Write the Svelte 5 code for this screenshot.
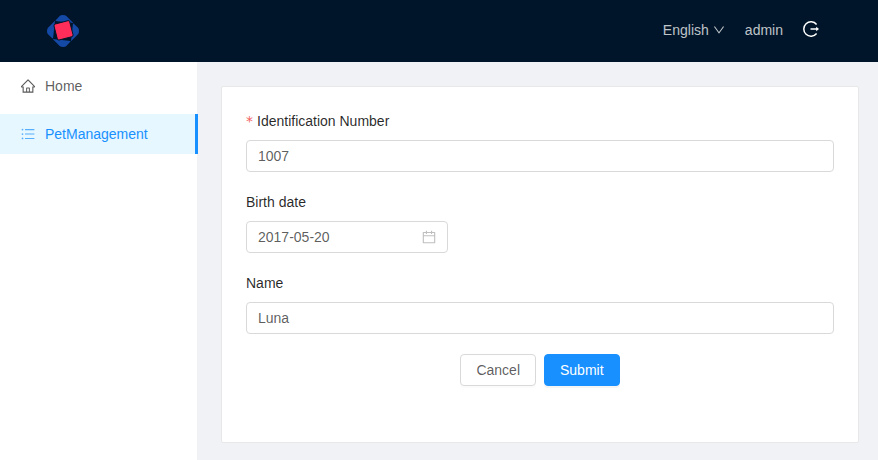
<script>
  let language = $state('en');
  let pet = $state({ identificationNumber: '1007', birthDate: '2017-05-20', name: 'Luna' });
</script>

<div class="layout">
  <header>
    <a class="logo" href="#home" aria-label="Home page">
      <svg viewBox="0 0 102 102" width="34" height="34" aria-hidden="true">
        <path fill="#1449a6" d="M27 21 L41 6 Q44 3 50 3 Q58 3 61 6 L82 27ZM81 27 L96 41 Q99 44 99 50 Q99 58 96 61 L75 82ZM75 81 L61 96 Q58 99 52 99 Q44 99 41 96 L20 75ZM21 75 L6 61 Q3 58 3 52 Q3 44 6 41 L27 20Z" />
        <path fill="#ff2d5a" stroke="#001529" stroke-width="3" d="M28 30 L66 20 Q70 19 71 23 L81 62 Q82 67 78 68 L39 78 Q35 79 34 75 L24 36 Q23 31 28 30Z" />
        <path fill="none" stroke="#001529" stroke-width="3" d="M22 15 L34 27M87 22 L75 34M80 87 L68 75M15 80 L27 68" />
      </svg>
    </a>
    <div class="tools">
      <label class="language">
        <select bind:value={language} aria-label="Language">
          <option value="en">English</option>
        </select>
        <svg viewBox="64 64 896 896" width="12" height="12" fill="currentColor" aria-hidden="true">
          <path d="M884 256h-75c-5.100 0-9.900 2.500-12.900 6.600L512 654.200 227.900 262.600c-3-4.100-7.800-6.600-12.900-6.600h-75c-6.500 0-10.300 7.400-6.500 12.700l352.600 486.100c12.800 17.600 39 17.600 51.700 0l352.600-486.100c3.900-5.300.1-12.700-6.400-12.700z" />
        </svg>
      </label>
      <span>admin</span>
      <button class="logout" type="button" aria-label="Log out">
        <svg viewBox="0 0 16 16" width="16" height="16" aria-hidden="true">
          <path fill="none" stroke="currentColor" stroke-width="1.500" d="M13.600 3.500 A7.200 7.200 0 1 0 13.600 12.500 M7.500 8 H14" />
          <path fill="currentColor" d="M13.200 5.700 L16 8 L13.200 10.300Z" />
        </svg>
      </button>
    </div>
  </header>

  <div class="body">
    <nav>
      <a href="#home">
        <svg viewBox="64 64 896 896" width="14" height="14" fill="currentColor" aria-hidden="true">
          <path d="M946.500 505L560.100 118.800l-25.900-25.900a31.500 31.500 0 0 0-44.400 0L77.500 505a63.900 63.900 0 0 0-18.800 46c.4 35.200 29.700 63.300 64.900 63.300h42.500V940h691.800V614.300h43.400c17.100 0 33.200-6.700 45.300-18.800a63.600 63.600 0 0 0 18.700-45.300c0-17-6.700-33.100-18.800-45.200zM568 868H456V664h112v204zm217.900-325.700V868H632V640c0-22.100-17.900-40-40-40H432c-22.100 0-40 17.900-40 40v228H238.100V542.300h-96l370-369.700 23.100 23.100L882 542.300h-96.100z" />
        </svg>
        <span>Home</span>
      </a>
      <a class="active" href="#pets" aria-current="page">
        <svg viewBox="64 64 896 896" width="14" height="14" fill="currentColor" aria-hidden="true">
          <path d="M912 192H328c-4.400 0-8 3.600-8 8v56c0 4.400 3.600 8 8 8h584c4.400 0 8-3.600 8-8v-56c0-4.400-3.600-8-8-8zm0 284H328c-4.400 0-8 3.600-8 8v56c0 4.400 3.600 8 8 8h584c4.400 0 8-3.600 8-8v-56c0-4.400-3.600-8-8-8zm0 284H328c-4.400 0-8 3.600-8 8v56c0 4.400 3.600 8 8 8h584c4.400 0 8-3.600 8-8v-56c0-4.400-3.600-8-8-8zM104 228a56 56 0 1 0 112 0 56 56 0 1 0-112 0zm0 284a56 56 0 1 0 112 0 56 56 0 1 0-112 0zm0 284a56 56 0 1 0 112 0 56 56 0 1 0-112 0z" />
        </svg>
        <span>PetManagement</span>
      </a>
    </nav>

    <main>
      <form class="card" onsubmit={(event) => event.preventDefault()}>
        <div class="field">
          <label class="required" for="identification-number">Identification Number</label>
          <input id="identification-number" type="text" required bind:value={pet.identificationNumber} />
        </div>
        <div class="field">
          <label for="birth-date">Birth date</label>
          <div class="date">
            <input id="birth-date" type="text" bind:value={pet.birthDate} />
            <svg viewBox="64 64 896 896" width="14" height="14" fill="currentColor" aria-hidden="true">
              <path d="M880 184H712v-64c0-4.400-3.600-8-8-8h-56c-4.400 0-8 3.600-8 8v64H384v-64c0-4.400-3.600-8-8-8h-56c-4.400 0-8 3.600-8 8v64H144c-17.700 0-32 14.300-32 32v664c0 17.700 14.300 32 32 32h736c17.700 0 32-14.300 32-32V216c0-17.700-14.300-32-32-32zm-40 656H184V460h656v380zM184 392V256h128v48c0 4.400 3.600 8 8 8h56c4.400 0 8-3.600 8-8v-48h256v48c0 4.400 3.600 8 8 8h56c4.400 0 8-3.600 8-8v-48h128v136H184z" />
            </svg>
          </div>
        </div>
        <div class="field">
          <label for="pet-name">Name</label>
          <input id="pet-name" type="text" bind:value={pet.name} />
        </div>
        <div class="actions">
          <button type="button">Cancel</button>
          <button class="primary" type="submit">Submit</button>
        </div>
      </form>
    </main>
  </div>
</div>

<style>
  .layout {
    display: flex;
    flex-direction: column;
    min-height: 100vh;
    background: #f0f2f5;
    color: rgba(0, 0, 0, 0.65);
    font: 14px/21px "Liberation Sans", Arial, sans-serif;
  }

  .layout * {
    box-sizing: border-box;
  }

  svg {
    display: block;
    flex: none;
  }

  header {
    display: flex;
    align-items: center;
    justify-content: space-between;
    height: 62px;
    padding: 0 59px 0 46px;
    background: #001529;
    color: rgba(255, 255, 255, 0.75);
  }

  .tools {
    display: flex;
    align-items: center;
    gap: 20px;
    padding-bottom: 2px;
  }

  .language {
    display: flex;
    align-items: center;
    gap: 4px;
  }

  select {
    appearance: none;
    padding: 0;
    border: 0;
    background: transparent;
    color: inherit;
    font: inherit;
  }

  .logout {
    padding: 0 0 2px;
    border: 0;
    background: transparent;
    color: #fff;
  }

  .body {
    display: flex;
    flex: 1;
  }

  nav {
    flex: none;
    width: 197px;
    padding-top: 4px;
    background: #fff;
  }

  nav a {
    display: flex;
    align-items: center;
    gap: 10px;
    height: 40px;
    margin: 0 -1px 8px 0;
    padding-left: 21px;
    border-right: 3px solid transparent;
    color: inherit;
    text-decoration: none;
  }

  nav a.active {
    border-right-color: #1890ff;
    background: #e6f7ff;
    color: #1890ff;
  }

  nav a.active svg {
    opacity: 0.7;
  }

  main {
    flex: 1;
    min-width: 0;
    padding: 24px 19px 17px 24px;
  }

  .card {
    padding: 24px 24px 56px;
    border: 1px solid #e8e8e8;
    border-radius: 2px;
    background: #fff;
  }

  .field {
    margin-bottom: 20px;
  }

  .field label {
    display: block;
    margin-bottom: 8px;
    color: rgba(0, 0, 0, 0.85);
  }

  .required::before {
    content: "*";
    margin-right: 4px;
    color: #f2605f;
    font-family: "DejaVu Sans", sans-serif;
    line-height: 1;
  }

  input {
    display: block;
    width: 100%;
    height: 32px;
    padding: 4px 11px;
    border: 1px solid #d9d9d9;
    border-radius: 4px;
    background: #fff;
    color: inherit;
    font: inherit;
  }

  .date {
    position: relative;
    width: 202px;
  }

  .date svg {
    position: absolute;
    top: 9px;
    right: 12px;
    color: rgba(0, 0, 0, 0.25);
    pointer-events: none;
  }

  .actions {
    display: flex;
    justify-content: center;
    gap: 8px;
  }

  .actions button {
    height: 32px;
    padding: 0 15px;
    border: 1px solid #d9d9d9;
    border-radius: 4px;
    background: #fff;
    color: inherit;
    font: inherit;
    box-shadow: 0 2px 0 rgba(0, 0, 0, 0.015);
  }

  .actions .primary {
    border-color: #1890ff;
    background: #1890ff;
    color: #fff;
    box-shadow: 0 2px 0 rgba(0, 0, 0, 0.045);
  }
</style>
